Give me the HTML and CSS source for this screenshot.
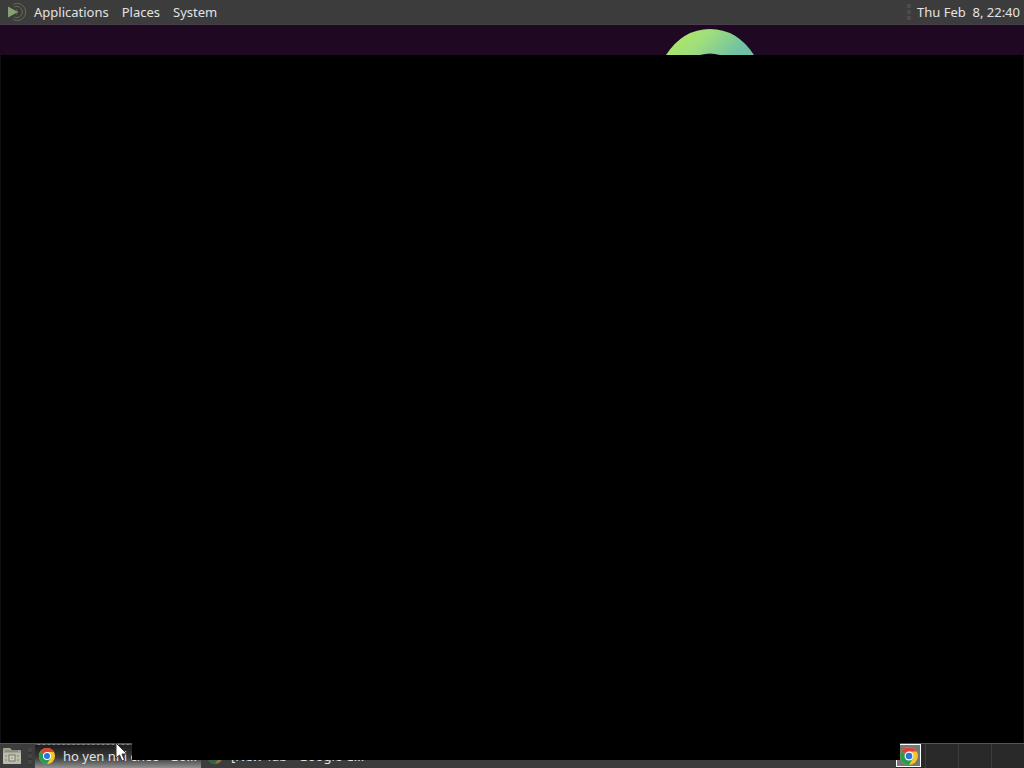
FILE: index.html
```html
<!DOCTYPE html>
<html lang="en">
<head>
<meta charset="utf-8">
<title>Desktop</title>
<link rel="stylesheet" href="styles.css">
</head>
<body>
<div class="desktop">
  <header class="panel top-panel">
    <nav class="menus">
      <svg class="logo" width="20" height="20" viewBox="0 0 20 20" aria-hidden="true">
        <g fill="none" stroke="#66714f">
          <path d="M6 2.6A8.5 8.5 0 1 1 6 17.4" stroke-width="1"/>
          <path d="M7 5.1A5.6 5.6 0 1 1 7 14.9" stroke-width="1"/>
          <path d="M9 7.4A3 3 0 0 1 9 12.6" stroke-width="1"/>
        </g>
        <path d="M1 4.5L11 10L1 15.5Z" fill="#87a073"/>
      </svg>
      <button class="menu" type="button">Applications</button>
      <button class="menu" type="button">Places</button>
      <button class="menu" type="button">System</button>
    </nav>
    <div class="tray">
      <span class="grip"></span>
      <time class="clock">Thu Feb&nbsp; 8, 22:40</time>
    </div>
  </header>
  <div class="wallpaper">
    <svg class="emblem" width="100" height="30" viewBox="0 0 100 30" aria-hidden="true">
      <defs>
        <linearGradient id="ring" x1="0" y1="0" x2="1" y2="0.3">
          <stop offset="0" stop-color="#b5ec5c"/>
          <stop offset="0.5" stop-color="#9fde7c"/>
          <stop offset="1" stop-color="#6fc0a5"/>
        </linearGradient>
      </defs>
      <path d="M6 30Q23 4 50 4T94 30H60Q50 27 40 30Z" fill="url(#ring)"/>
    </svg>
  </div>
  <main class="window"></main>
  <footer class="panel bottom-panel">
    <button class="show-desktop" type="button" aria-label="Show desktop">
      <svg width="20" height="18" viewBox="0 0 20 18" aria-hidden="true">
        <path d="M1 2Q1 1 2 1H8L10 3H18Q19 3 19 4V16Q19 17 18 17H2Q1 17 1 16Z" fill="#a5a593"/>
        <path d="M1 6H19V16Q19 17 18 17H2Q1 17 1 16Z" fill="#bcbcab"/>
        <path d="M3 4H16" stroke="#77776c"/>
        <rect x="7" y="8" width="6" height="6" fill="#cfcfc1" stroke="#77776c"/>
        <path d="M3 9H5M3 13H5M15 9H17M15 13H17M9 11H11" stroke="#88887c"/>
      </svg>
    </button>
    <span class="grip dim"></span>
    <button class="task active" type="button">
      <svg class="chrome" width="18" height="18" viewBox="0 0 18 18" aria-hidden="true">
        <g id="browser">
          <circle cx="9" cy="9" r="8" fill="#f4c72b"/>
          <path d="M9 9L2.1 5A8 8 0 0 1 15.9 5H9Z" fill="#dc4335"/>
          <path d="M9 9L2.1 5A8 8 0 0 0 9 17L12.5 11Z" fill="#299b50"/>
          <circle cx="9" cy="9" r="4" fill="#fff"/>
          <circle cx="9" cy="9" r="3" fill="#2f72da"/>
        </g>
      </svg>
      <span class="label">ho yen nhi chec - Go...</span>
    </button>
    <button class="task" type="button">
      <svg class="chrome faded" width="18" height="18" viewBox="0 0 18 18" aria-hidden="true"><use href="#browser"/></svg>
      <span class="label">[New Tab - Google C...</span>
    </button>
    <span class="shade"></span>
    <div class="workspaces">
      <button class="workspace current" type="button" aria-label="Workspace 1">
        <span class="mini"><svg width="20" height="20" viewBox="0 0 18 18" aria-hidden="true"><use href="#browser"/></svg></span>
      </button>
      <button class="workspace" type="button" aria-label="Workspace 2"></button>
      <button class="workspace" type="button" aria-label="Workspace 3"></button>
      <button class="workspace" type="button" aria-label="Workspace 4"></button>
    </div>
  </footer>
  <svg class="cursor" width="14" height="20" viewBox="0 0 14 20" aria-hidden="true">
    <path d="M1 1V16L4.5 13L7 19L9.5 18L7 12H12Z" fill="#fff" stroke="#333" stroke-width="1"/>
  </svg>
</div>
</body>
</html>
```
FILE: styles.css
```css
* {
  box-sizing: border-box;
}

body {
  margin: 0;
  background: #000;
  color: #e2e2e2;
  font: 13px/18px "Noto Sans", "Open Sans", sans-serif;
}

button {
  margin: 0;
  padding: 0;
  border: 0;
  background: none;
  color: inherit;
  font: inherit;
}

svg {
  display: block;
  flex: none;
}

.desktop {
  position: relative;
  display: flex;
  flex-direction: column;
  min-height: 100vh;
}

.panel {
  display: flex;
  height: 25px;
  background: #3c3c3c;
}

.top-panel {
  align-items: center;
  justify-content: space-between;
  padding: 0 4px 0 7px;
  border-bottom: 1px solid #493f4b;
}

.menus {
  display: flex;
  align-items: center;
  gap: 13px;
}

.logo {
  margin-right: -6px;
}

.tray {
  display: flex;
  align-items: center;
  gap: 6px;
}

.grip {
  width: 4px;
  height: 17px;
  background: repeating-linear-gradient(#4d4a4c 0 4px, #3c3c3c 4px 6px);
}

.grip.dim {
  align-self: center;
  margin: 0 3px 0 4px;
  background: repeating-linear-gradient(#454545 0 4px, #353535 4px 6px);
}

.wallpaper {
  display: flex;
  height: 30px;
  padding-left: 64.5%;
  background: #1f0922;
}

.window {
  flex: 1;
  border-left: 1px solid #0d1014;
  border-right: 1px solid #0d1014;
  background: #000;
}

.bottom-panel {
  position: relative;
  border-top: 1px solid #555;
}

.show-desktop {
  display: flex;
  align-items: center;
  width: 24px;
  padding-left: 2px;
}

.task {
  display: flex;
  align-items: center;
  gap: 7px;
  width: 166px;
  padding: 0 4px 1px 3px;
  text-align: left;
}

.task.active {
  border-top: 1px dashed #565656;
  background: linear-gradient(#1c1c1c, #3b3b3b 55%, #929292);
}

.task + .task {
  margin-left: 2px;
}

.label {
  white-space: nowrap;
}

.faded {
  opacity: 0.4;
}

.shade {
  position: absolute;
  top: -1px;
  left: 132px;
  right: 124px;
  height: 17px;
  background: #000;
}

.workspaces {
  display: flex;
  width: 128px;
  margin-left: auto;
  background: #29292a;
}

.workspace {
  width: 33px;
  border-left: 1px solid #3b3b3c;
}

.workspace.current {
  display: flex;
  flex: 1;
  border: 0;
}

.mini {
  display: flex;
  align-items: center;
  justify-content: center;
  width: 25px;
  height: 23px;
  border: 1px solid #fff;
  background: #777;
}

.cursor {
  position: absolute;
  bottom: 6px;
  left: 115px;
}
```
